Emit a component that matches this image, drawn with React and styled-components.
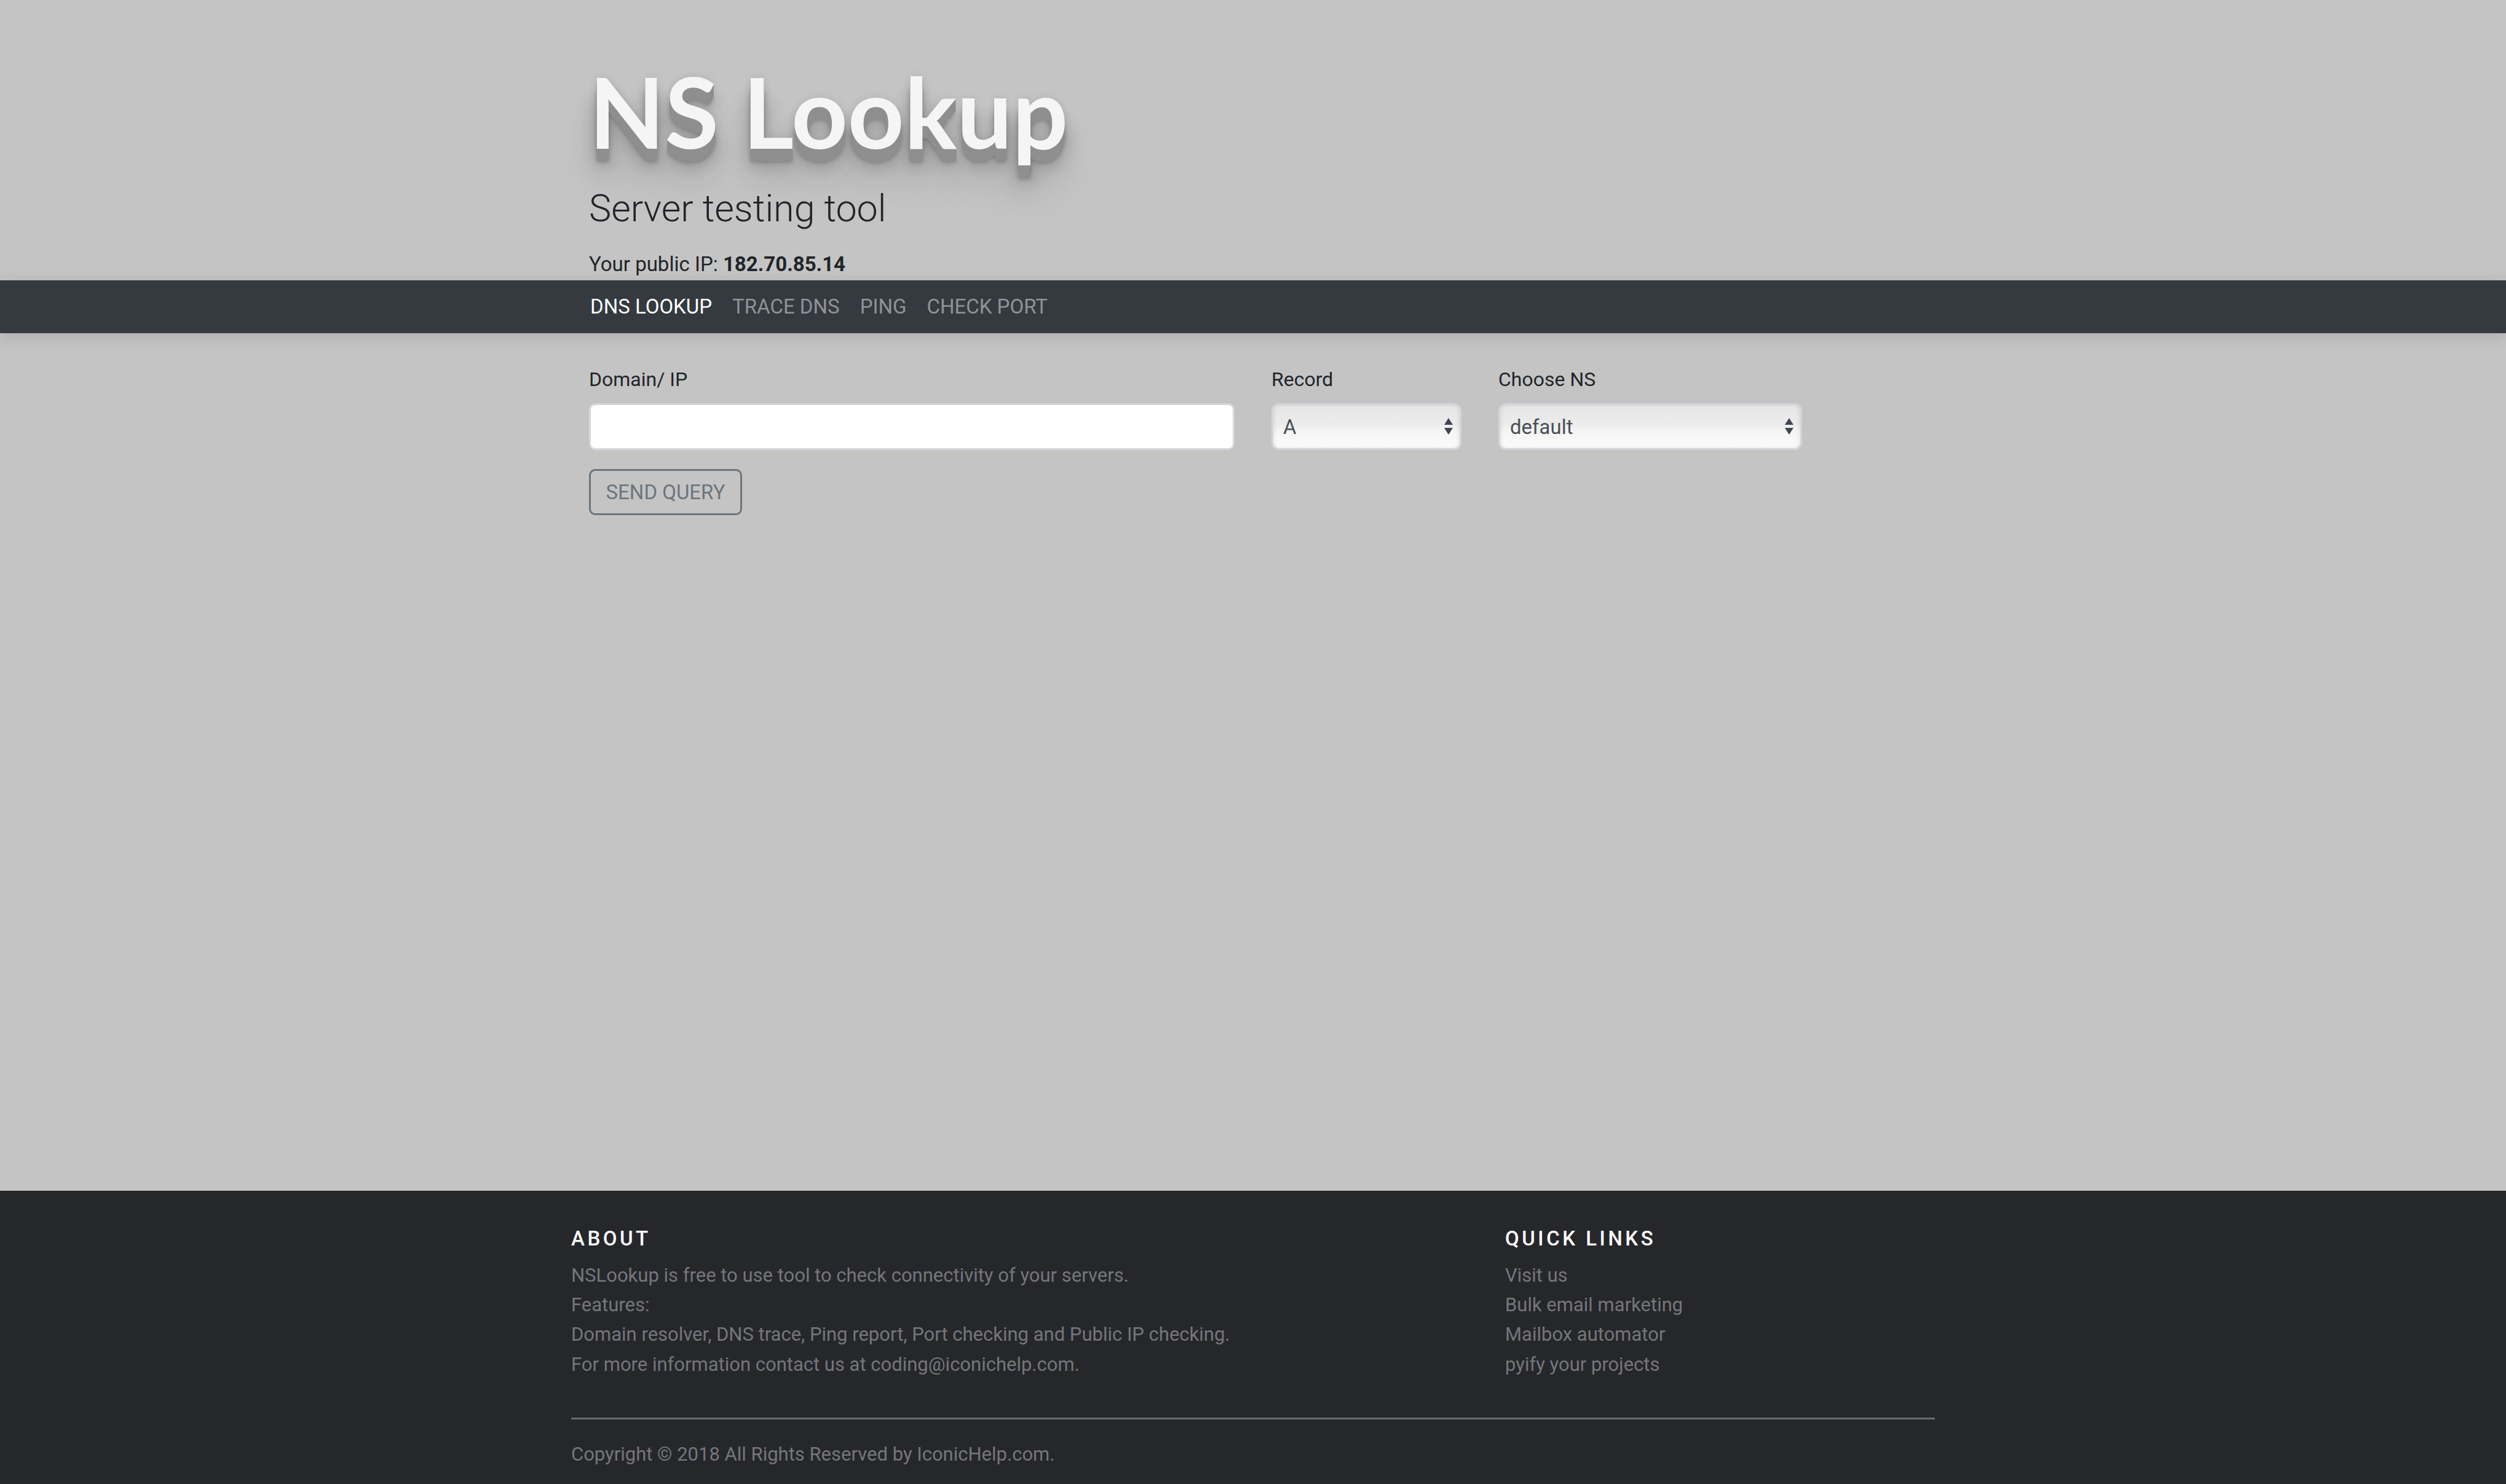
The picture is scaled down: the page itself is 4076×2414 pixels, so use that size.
import React from "react";
import styled, { createGlobalStyle } from "styled-components";

const GlobalStyle = createGlobalStyle`
  html, body { margin: 0; padding: 0; }
  body {
    background: #c4c4c4;
    font-family: Roboto, "Liberation Sans", Arial, sans-serif;
    color: #212529;
  }
  #root { min-height: 100vh; display: flex; flex-direction: column; }
  * { box-sizing: border-box; }
`;

const extrusion = Array.from({ length: 20 }, (_, i) => `0 ${i + 1}px 0 #8f8f8f`).join(", ");
const titleShadow = `${extrusion}, 0 0 14px rgba(0,0,0,.10), 0 22px 6px rgba(0,0,0,.22), 0 26px 24px rgba(0,0,0,.2), 0 40px 40px rgba(0,0,0,.12), 0 60px 70px rgba(0,0,0,.10)`;

const Page = styled.div`
  flex: 1;
  display: flex;
  flex-direction: column;
`;

const Container = styled.div`
  width: ${(p) => p.$w || 2160}px;
  margin: 0 auto;
`;

const Header = styled.header`
  padding-top: 100px;
  padding-bottom: 2px;
`;

const Title = styled.h1`
  margin: 0;
  font-family: Lato, "Open Sans", sans-serif;
  font-weight: 700;
  font-size: 160px;
  line-height: 1;
  color: #f5f5f5;
  text-shadow: ${titleShadow};
`;

const Subtitle = styled.div`
  margin-top: 43px;
  font-size: 61px;
  font-weight: 300;
  line-height: 1.2;
  color: #212529;
`;

const IpLine = styled.div`
  margin-top: 30px;
  font-size: 33px;
  line-height: 48px;
  color: #212529;
  b { font-weight: 700; }
`;

const NavBar = styled.nav`
  background: #343a40;
  height: 86px;
  box-shadow: 0 6px 24px rgba(0, 0, 0, 0.12);
  position: relative;
  z-index: 1;
`;

const NavInner = styled(Container)`
  height: 100%;
  display: flex;
  align-items: center;
  gap: 33px;
  padding-left: 2px;
  padding-bottom: 2px;
`;

const NavLink = styled.a`
  font-size: 33px;
  text-transform: uppercase;
  color: ${(p) => (p.$active ? "#ffffff" : "#8f9398")};
  text-decoration: none;
`;

const Main = styled.main`
  flex: 1;
  padding-top: 50px;
`;

const FormRow = styled.div`
  display: grid;
  grid-template-columns: 1050px 309px 494px;
  column-gap: 60px;
`;

const Field = styled.div`
  display: flex;
  flex-direction: column;
`;

const Label = styled.label`
  font-size: 32px;
  line-height: 50px;
  color: #212529;
  margin-bottom: 14px;
`;

const TextInput = styled.input`
  height: 76px;
  border: 3px solid #d4d8dd;
  border-radius: 10px;
  background: #ffffff;
  font-size: 32px;
  padding: 0 18px;
  outline: none;
`;

const SelectWrap = styled.div`
  position: relative;
  height: 76px;
`;

const Select = styled.select`
  appearance: none;
  -webkit-appearance: none;
  width: 100%;
  height: 100%;
  border: 3px solid #d2d6db;
  border-radius: 12px;
  background: linear-gradient(#e6e6e6 0%, #ececec 45%, #f5f5f5 60%, #fbfbfb 100%);
  box-shadow: inset 3px 0 4px rgba(0, 0, 0, 0.06), inset -3px 0 4px rgba(0, 0, 0, 0.06);
  font-family: Roboto, "Liberation Sans", Arial, sans-serif;
  font-size: 33px;
  color: #495057;
  padding: 0 16px;
  outline: none;
`;

const Arrows = styled.svg`
  position: absolute;
  right: 13px;
  top: 50%;
  transform: translateY(-50%);
  pointer-events: none;
`;

const Button = styled.button`
  margin-top: 31px;
  width: 249px;
  height: 75px;
  border: 3px solid #6c757d;
  border-radius: 10px;
  background: transparent;
  color: #6c757d;
  font-family: Roboto, "Liberation Sans", Arial, sans-serif;
  font-size: 33px;
  text-transform: uppercase;
  padding: 0;
`;

const Footer = styled.footer`
  background: #26272b;
  padding: 58px 0 24px;
`;

const FooterCols = styled.div`
  display: grid;
  grid-template-columns: 1519px 1fr;
`;

const FooterHeading = styled.h6`
  margin: 0 0 16px;
  font-size: 33px;
  line-height: 40px;
  font-weight: 500;
  letter-spacing: 4.5px;
  color: #ffffff;
  text-transform: uppercase;
`;

const FooterText = styled.div`
  font-size: 31px;
  line-height: 48.3px;
  color: #75767a;
`;

const LinkList = styled.ul`
  list-style: none;
  margin: 0;
  padding: 0;
`;

const LinkItem = styled.li`
  font-size: 31px;
  line-height: 48.3px;
  color: #75767a;
`;

const Rule = styled.hr`
  margin: 62px 0 33px;
  border: 0;
  border-top: 3px solid #6a6b6f;
`;

const Copyright = styled.p`
  margin: 0;
  font-size: 31px;
  line-height: 48px;
  color: #75767a;
`;

function SelectArrows() {
  return (
    <Arrows width="16" height="30" viewBox="0 0 16 30">
      <polygon points="8,1 15,12 1,12" fill="#40464f" />
      <polygon points="1,17 15,17 8,28" fill="#40464f" />
    </Arrows>
  );
}

export default function App() {
  return (
    <>
      <GlobalStyle />
      <Page>
        <Header>
          <Container>
            <Title>NS Lookup</Title>
            <Subtitle>Server testing tool</Subtitle>
            <IpLine>
              Your public IP: <b>182.70.85.14</b>
            </IpLine>
          </Container>
        </Header>
        <NavBar>
          <NavInner>
            <NavLink $active href="#">DNS Lookup</NavLink>
            <NavLink href="#">Trace DNS</NavLink>
            <NavLink href="#">Ping</NavLink>
            <NavLink href="#">Check Port</NavLink>
          </NavInner>
        </NavBar>
        <Main>
          <Container>
            <FormRow>
              <Field>
                <Label>Domain/ IP</Label>
                <TextInput type="text" />
              </Field>
              <Field>
                <Label>Record</Label>
                <SelectWrap>
                  <Select defaultValue="A">
                    <option>A</option>
                    <option>AAAA</option>
                    <option>MX</option>
                    <option>NS</option>
                  </Select>
                  <SelectArrows />
                </SelectWrap>
              </Field>
              <Field>
                <Label>Choose NS</Label>
                <SelectWrap>
                  <Select defaultValue="default">
                    <option>default</option>
                  </Select>
                  <SelectArrows />
                </SelectWrap>
              </Field>
            </FormRow>
            <Button>Send Query</Button>
          </Container>
        </Main>
        <Footer>
          <Container $w={2218}>
            <FooterCols>
              <div>
                <FooterHeading>About</FooterHeading>
                <FooterText>
                  NSLookup is free to use tool to check connectivity of your servers.
                  <br />
                  Features:
                  <br />
                  Domain resolver, DNS trace, Ping report, Port checking and Public IP checking.
                  <br />
                  For more information contact us at coding@iconichelp.com.
                </FooterText>
              </div>
              <div>
                <FooterHeading>Quick Links</FooterHeading>
                <LinkList>
                  <LinkItem>Visit us</LinkItem>
                  <LinkItem>Bulk email marketing</LinkItem>
                  <LinkItem>Mailbox automator</LinkItem>
                  <LinkItem>pyify your projects</LinkItem>
                </LinkList>
              </div>
            </FooterCols>
            <Rule />
            <Copyright>Copyright © 2018 All Rights Reserved by IconicHelp.com.</Copyright>
          </Container>
        </Footer>
      </Page>
    </>
  );
}
